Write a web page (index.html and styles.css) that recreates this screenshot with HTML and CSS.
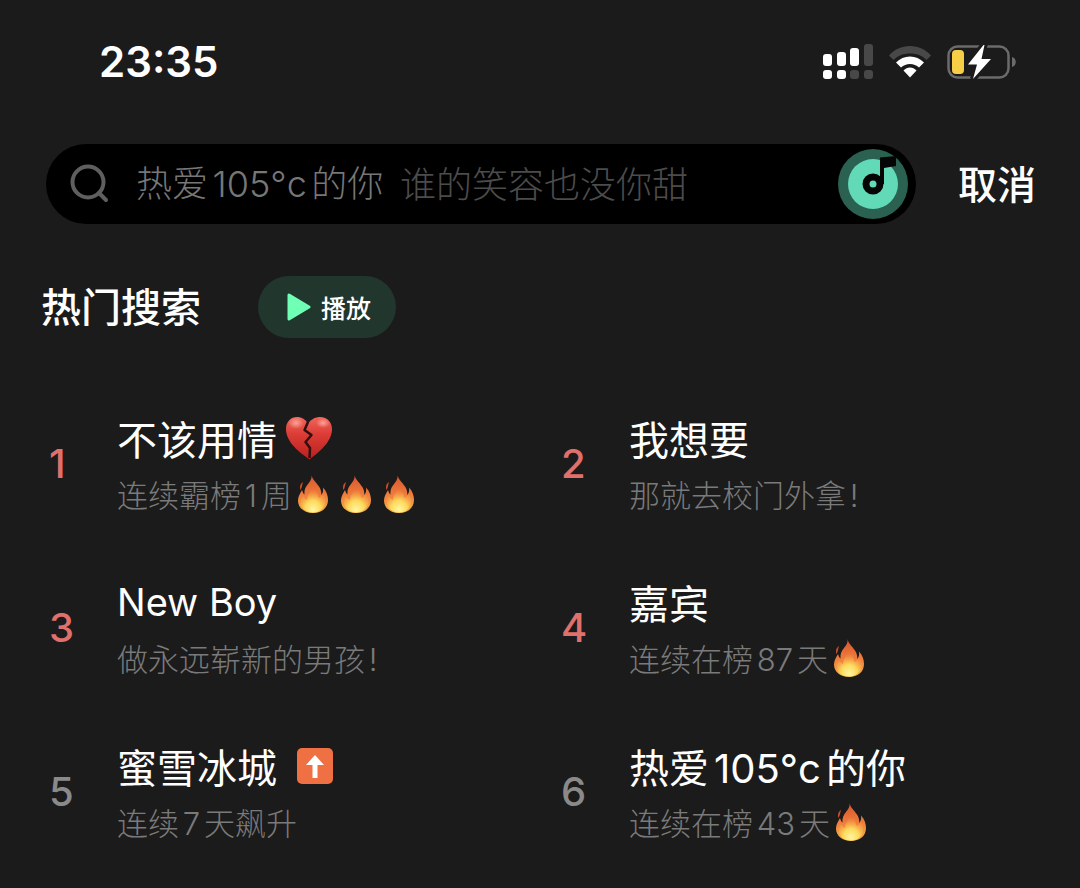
FILE: index.html
```
<!DOCTYPE html>
<html lang="zh-CN">
<head>
    <meta charset="UTF-8">
    <meta name="viewport" content="width=device-width, initial-scale=1.0">
    <title>搜索</title>
    <link rel="stylesheet" href="styles.css">
</head>
<body>
    <svg class="defs" width="0" height="0" aria-hidden="true">
        <defs>
            <linearGradient id="flame-outer" x1="0" y1="0" x2="0" y2="1">
                <stop offset="0" stop-color="#d9532c"/>
                <stop offset="0.5" stop-color="#ee7b3c"/>
                <stop offset="1" stop-color="#f7b545"/>
            </linearGradient>
            <radialGradient id="flame-inner" cx="0.5" cy="0.9" r="0.75">
                <stop offset="0" stop-color="#fff6a0"/>
                <stop offset="0.45" stop-color="#fdd95c"/>
                <stop offset="1" stop-color="#f49a44" stop-opacity="0"/>
            </radialGradient>
            <linearGradient id="heart-fill" x1="0" y1="0" x2="0" y2="1">
                <stop offset="0" stop-color="#f0655a"/>
                <stop offset="0.4" stop-color="#dc3d36"/>
                <stop offset="1" stop-color="#b9201f"/>
            </linearGradient>
            <radialGradient id="heart-shine" cx="0.5" cy="0.5" r="0.5">
                <stop offset="0" stop-color="#ffb5a8" stop-opacity="0.8"/>
                <stop offset="1" stop-color="#ffb5a8" stop-opacity="0"/>
            </radialGradient>
        </defs>
        <symbol id="flame" viewBox="0 0 32 38">
            <path fill="url(#flame-outer)" d="M14.500 0C15 4 19 7 22 11.500C24 14.500 24.500 17.500 24.200 20C25.800 18.500 26.500 15.500 26 12.500C29.500 16 31 20.500 31 25C31 33 24.500 38 16 38C7.500 38 1 33 1 25.500C1 21 3.500 18 5 15C5.800 17 6.200 18.500 7.500 19.500C7 15 8.500 12 11 9C13.500 6 15 3.500 14.500 0Z"/>
            <path fill="#c94f2b" d="M6 7C3 9 2.500 12 3.500 15C5 13 5 10 6 7Z"/>
            <path fill="url(#flame-inner)" d="M16 10C18 15 21 18 21.500 23C24 22 25 20 25.500 18C28 22 29 26 27.500 30C25.500 35 21 37.500 16 37.500C10 37.500 5 34 4 29C3.500 25 5 23 6 21C7 23 8 24 10 25C10 19 15 16 16 10Z"/>
        </symbol>
        <symbol id="broken-heart" viewBox="0 0 48 44">
            <path fill="url(#heart-fill)" d="M24.500 43.500C14 36 1 26 1 13C1 5.500 6 1 12 1C17 1 20.500 3.500 23 7.500C26.500 3 30.500 1 35.500 1C42 1 47 6 47 13C47 26 34 36 24.500 43.500Z"/>
            <ellipse fill="url(#heart-shine)" cx="11" cy="7" rx="8" ry="6"/>
            <ellipse fill="url(#heart-shine)" cx="38" cy="7" rx="7" ry="5"/>
            <path fill="none" stroke="#300f10" stroke-width="2.500" stroke-linejoin="round" d="M23 6L19.500 14L26.500 19L20.500 26L25 32L24.500 42"/>
        </symbol>
    </svg>

    <header class="status-bar">
        <span class="time">23:35</span>
        <div class="status-icons">
            <svg width="50" height="36" viewBox="0 0 50 36" aria-hidden="true">
                <g fill="#fff">
                    <rect x="0" y="10" width="9" height="12" rx="3"/>
                    <rect x="14" y="8" width="9" height="14" rx="3"/>
                    <rect x="27" y="4" width="9" height="18" rx="3"/>
                    <rect x="0" y="26" width="9" height="9" rx="3"/>
                    <rect x="14" y="26" width="9" height="9" rx="3"/>
                </g>
                <g fill="#484848">
                    <rect x="41" y="0" width="9" height="22" rx="3"/>
                    <rect x="27" y="26" width="9" height="9" rx="3"/>
                    <rect x="41" y="26" width="9" height="9" rx="3"/>
                </g>
            </svg>
            <svg width="42" height="34" viewBox="0 0 42 34" aria-hidden="true">
                <path fill="#484848" d="M0 10.500C5.500 4.500 12.500 1 21 1C29.500 1 36.500 4.500 42 10.500L37.500 15C33 10.500 27.500 8.500 21 8.500C14.500 8.500 9 10.500 4.500 15Z"/>
                <path fill="#fff" d="M7 17.500C11 13.500 15.500 11.500 21 11.500C26.500 11.500 31 13.500 35 17.500L30 22.500C27.500 20.500 24.500 19 21 19C17.500 19 14.500 20.500 12 22.500Z"/>
                <path fill="#fff" d="M14.500 25.500C16.500 23.500 18.500 22.500 21 22.500C23.500 22.500 25.500 23.500 27.500 25.500L21 32.500Z"/>
            </svg>
            <svg width="70" height="36" viewBox="0 0 70 36" aria-hidden="true">
                <rect x="1.500" y="2.500" width="60" height="31" rx="9" fill="none" stroke="#6b6b6b" stroke-width="2.500"/>
                <path fill="#6b6b6b" d="M65 13C70 14 70 22 65 23Z"/>
                <path fill="#fff" stroke="#1b1b1b" stroke-width="6" paint-order="stroke" d="M36.500 1L21 20.500H30L26 35L44 15H34.500L37.500 1Z"/>
                <rect x="5" y="6" width="12" height="24" rx="4" fill="#f6cf47"/>
            </svg>
        </div>
    </header>

    <form class="search-row">
        <div class="search-box">
            <svg class="search-icon" width="40" height="40" viewBox="0 0 40 40" aria-hidden="true">
                <circle cx="18" cy="18" r="15.500" fill="none" stroke="#5f5f5f" stroke-width="4"/>
                <path d="M29 29L36 36" stroke="#5f5f5f" stroke-width="4" stroke-linecap="round"/>
            </svg>
            <input class="search-input" type="text" placeholder="热爱105°c的你" aria-label="搜索歌曲">
            <span class="search-hint">谁的笑容也没你甜</span>
            <button class="listen" type="button" aria-label="听歌识曲">
                <svg width="70" height="70" viewBox="0 0 70 70" aria-hidden="true">
                    <circle cx="35" cy="35" r="35" fill="#2b6150"/>
                    <circle cx="35" cy="35" r="25" fill="#62dab8"/>
                    <path d="M42 35V8.500L58 7V17L46 19V35Z" fill="#050505"/>
                    <circle cx="35" cy="35" r="7" fill="#62dab8" stroke="#050505" stroke-width="7"/>
                </svg>
            </button>
        </div>
        <button class="cancel" type="button">取消</button>
    </form>

    <main>
        <div class="section-head">
            <h1>热门搜索</h1>
            <button class="play" type="button">
                <svg width="24" height="28" viewBox="0 0 24 28" aria-hidden="true">
                    <path fill="#6fffb5" stroke="#6fffb5" stroke-width="3" stroke-linejoin="round" d="M2 2V26L22 14Z"/>
                </svg>
                播放
            </button>
        </div>

        <ol class="hot-list">
            <li class="hot-item">
                <span class="rank top">1</span>
                <div>
                    <h2>不该用情<svg class="heart" role="img" aria-label="心碎"><use href="#broken-heart"/></svg></h2>
                    <p>连续霸榜1周<svg class="flame"><use href="#flame"/></svg><svg class="flame"><use href="#flame"/></svg><svg class="flame"><use href="#flame"/></svg></p>
                </div>
            </li>
            <li class="hot-item">
                <span class="rank top">2</span>
                <div>
                    <h2>我想要</h2>
                    <p>那就去校门外拿!</p>
                </div>
            </li>
            <li class="hot-item">
                <span class="rank top">3</span>
                <div>
                    <h2 class="latin">New Boy</h2>
                    <p>做永远崭新的男孩!</p>
                </div>
            </li>
            <li class="hot-item">
                <span class="rank top">4</span>
                <div>
                    <h2>嘉宾</h2>
                    <p>连续在榜87天<svg class="flame"><use href="#flame"/></svg></p>
                </div>
            </li>
            <li class="hot-item">
                <span class="rank">5</span>
                <div>
                    <h2>蜜雪冰城<svg class="rise" viewBox="0 0 36 36" role="img" aria-label="上升">
                        <rect width="36" height="36" rx="5" fill="#ee7043"/>
                        <path fill="#fff" d="M18 7L27 17H20.500V30H15.500V17H9Z"/>
                    </svg></h2>
                    <p>连续7天飙升</p>
                </div>
            </li>
            <li class="hot-item">
                <span class="rank">6</span>
                <div>
                    <h2>热爱105°c的你</h2>
                    <p>连续在榜43天<svg class="flame"><use href="#flame"/></svg></p>
                </div>
            </li>
        </ol>
    </main>
</body>
</html>
```
FILE: styles.css
```
* {
    box-sizing: border-box;
}
body {
    margin: 0;
    background-color: #1b1b1b;
    color: #fff;
    font-family: Inter, "Noto Sans CJK SC", sans-serif;
    text-autospace: normal;
}
button {
    border: 0;
    padding: 0;
    background: none;
    color: inherit;
    font-family: inherit;
    cursor: pointer;
}
svg {
    flex: none;
}
.defs {
    position: absolute;
}
.status-bar {
    display: flex;
    align-items: center;
    justify-content: space-between;
    height: 124px;
    padding: 0 63px 0 99px;
}
.time {
    padding-bottom: 2px;
    font-size: 42px;
    font-weight: 600;
}
.status-icons {
    display: flex;
    align-items: center;
    gap: 16px;
}
.search-row {
    display: flex;
    align-items: center;
    gap: 42px;
    margin: 20px 44px 0 46px;
}
.search-box {
    flex: 1;
    display: flex;
    align-items: center;
    height: 80px;
    padding: 0 8px 0 24px;
    border-radius: 40px;
    background-color: #000;
}
.search-input {
    width: 250px;
    margin-left: 26px;
    padding: 0;
    border: 0;
    outline: 0;
    background: none;
    color: #fff;
    font-family: inherit;
    font-size: 36px;
    font-weight: 300;
    text-autospace: normal;
}
.search-input::placeholder {
    color: #777;
}
.search-hint {
    margin-left: 14px;
    padding-bottom: 4px;
    color: #4c4c4c;
    font-size: 36px;
    font-weight: 300;
    white-space: nowrap;
}
.listen {
    display: flex;
    margin-left: auto;
}
.cancel {
    padding-bottom: 4px;
    font-size: 39px;
    font-weight: 500;
}
.section-head {
    display: flex;
    align-items: center;
    gap: 57px;
    margin: 52px 41px 0;
}
h1 {
    margin: 0;
    padding-bottom: 4px;
    font-size: 40px;
    font-weight: 500;
}
.play {
    display: flex;
    align-items: center;
    gap: 10px;
    height: 62px;
    padding: 0 25px 0 29px;
    border-radius: 31px;
    background-color: #21362d;
    font-size: 25px;
    font-weight: 500;
}
.hot-list {
    display: grid;
    grid-template-columns: 1fr 1fr;
    gap: 54px 34px;
    margin: 72px 41px 0 49px;
    padding: 0 0 36px;
    list-style: none;
}
.hot-item {
    display: flex;
    align-items: center;
}
.rank {
    width: 68px;
    padding-bottom: 4px;
    color: #8a8a8a;
    font-size: 40px;
    font-weight: 500;
}
.rank.top {
    color: #e0706c;
}
.hot-item h2 {
    display: flex;
    align-items: center;
    height: 56px;
    margin: 0;
    font-size: 40px;
    font-weight: 400;
}
.hot-item h2.latin {
    font-size: 38px;
}
.hot-item p {
    display: flex;
    align-items: center;
    height: 54px;
    margin: 0;
    color: #7a7a7a;
    font-size: 31px;
    font-weight: 300;
}
.heart {
    width: 48px;
    height: 44px;
    margin-left: 8px;
}
.flame {
    width: 32px;
    height: 38px;
    margin: 2px 6px 0 5px;
}
.rise {
    width: 36px;
    height: 36px;
    margin-left: 20px;
}
```
